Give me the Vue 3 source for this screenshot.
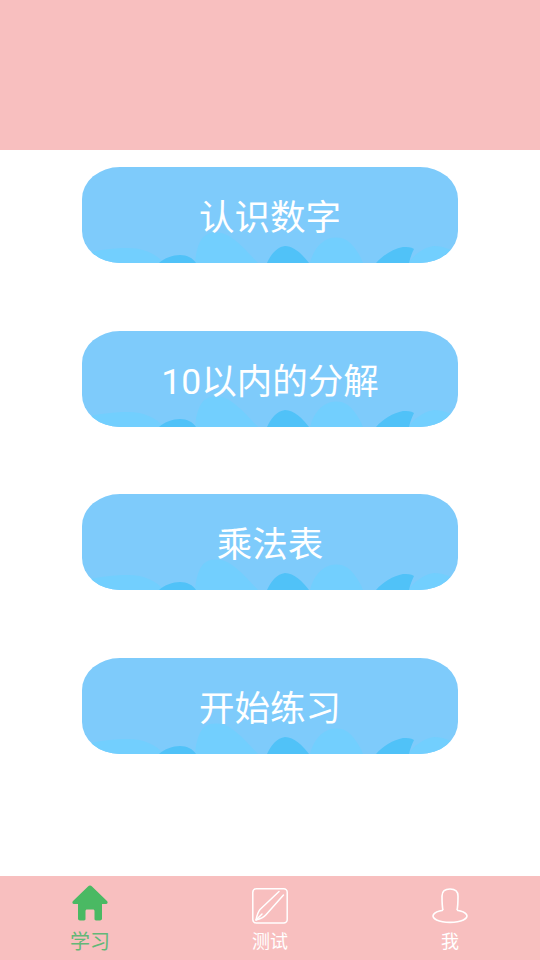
<script setup>
const buttons = ['认识数字', '10以内的分解', '乘法表', '开始练习']
</script>

<template>
  <div class="page">
    <header class="top"></header>
    <main class="list">
      <button v-for="label in buttons" :key="label" class="card" type="button">
        <svg class="waves" viewBox="0 0 376 96" preserveAspectRatio="none" aria-hidden="true">
          <path class="light" d="M0 96V88C12 83 30 81 46 81C62 81 74 87 82 96Z" />
          <path class="light" d="M113 96C114 84 117 72 124 68C131 64 142 65 150 71C160 78 168 88 176 96Z" />
          <path class="light" d="M228 96C231 84 238 74 249 71C258 69 266 72 271 79C275 84 279 90 281 96Z" />
          <path class="light" d="M326 96C332 88 342 80 352 79C360 79 369 82 376 87V96Z" />
          <path class="dark" d="M77 96C82 91 91 88 98 88C105 88 111 91 114 96Z" />
          <path class="dark" d="M185 96C189 87 195 80 203 79C212 79 221 88 227 96Z" />
          <path class="dark" d="M294 96C301 88 311 82 321 80C325 80 329 80 332 82C330 86 328 91 327 96Z" />
        </svg>
        <span class="label">{{ label }}</span>
      </button>
    </main>
    <nav class="tabs">
      <div class="tab active">
        <svg class="icon" viewBox="0 0 36 36" aria-hidden="true">
          <path fill="#4ab963" d="M18 0.5C18.8 0.5 19.4 0.9 20 1.5L35 16C36.2 17.2 35.6 19 34 19H30V33.5C30 34.6 29.2 35.5 28 35.5H24C23 35.5 22.5 34.8 22.5 33.8V26C22.5 25.2 22 24.5 21 24.5H15C14 24.5 13.5 25.2 13.5 26V33.8C13.5 34.8 13 35.5 12 35.5H8C6.8 35.5 6 34.6 6 33.5V19H2C0.4 19 -0.2 17.2 1 16L16 1.5C16.6 0.9 17.2 0.5 18 0.5Z" />
        </svg>
        <span class="tab-label big">学习</span>
      </div>
      <div class="tab">
        <svg class="icon low" viewBox="0 0 36 36" fill="none" stroke="#fff" stroke-width="1.5" stroke-linecap="round" stroke-linejoin="round" aria-hidden="true">
          <rect x="0.8" y="0.8" width="34.4" height="34.2" rx="3.5" />
          <path d="M27 3.5L8 21.5C6 24 4.8 28 4 32C8 31 12 29 14 26.7L31.5 7" />
          <path d="M4 32L10 26" />
        </svg>
        <span class="tab-label">测试</span>
      </div>
      <div class="tab">
        <svg class="icon low" viewBox="0 0 36 36" fill="none" stroke="#fff" stroke-width="1.6" aria-hidden="true">
          <path d="M11 22.3C10 18 10 12 10 8C10 3 13 1 18 1C23 1 26 3 26 8C26 12 26 18 25 22.3" />
          <path d="M11 22.3A17 6.3 0 1 0 25 22.3" />
        </svg>
        <span class="tab-label">我</span>
      </div>
    </nav>
  </div>
</template>

<style scoped>
.page {
  width: 540px;
  height: 960px;
  display: flex;
  flex-direction: column;
  background: #fff;
  font-family: Roboto, "Noto Sans CJK SC", sans-serif;
}
.top {
  height: 150px;
  flex: none;
  background: #f8bfbf;
}
.list {
  flex: 1;
  display: flex;
  flex-direction: column;
  align-items: center;
  gap: 67.7px;
  padding-top: 17px;
}
.card {
  position: relative;
  width: 376px;
  height: 96px;
  flex: none;
  padding: 0;
  border: 0;
  border-radius: 38px / 32px;
  overflow: hidden;
  background: #7ecbfb;
  color: #fff;
  font: inherit;
  font-size: 35.5px;
}
.waves {
  position: absolute;
  inset: 0;
  width: 100%;
  height: 100%;
}
.light { fill: #72cffe; }
.dark { fill: #50c2f8; }
.label {
  position: relative;
  display: block;
  padding-top: 6px;
  line-height: 96px;
  margin-top: -3px;
  white-space: nowrap;
}
.tabs {
  height: 84px;
  flex: none;
  display: grid;
  grid-template-columns: repeat(3, 1fr);
  background: #f8bfbf;
}
.tab {
  display: flex;
  flex-direction: column;
  align-items: center;
  padding-top: 9px;
  color: #fff;
}
.icon {
  width: 36px;
  height: 36px;
  display: block;
  overflow: visible;
}
.icon.low { margin-top: 3px; margin-bottom: -3px; }
.tab-label {
  margin-top: 9px;
  font-size: 18px;
  line-height: 24px;
}
.tab-label.big { font-size: 20px; }
.tab.active { color: #62b878; }
</style>

<style>
html, body { margin: 0; padding: 0; background: #fff; }
</style>
